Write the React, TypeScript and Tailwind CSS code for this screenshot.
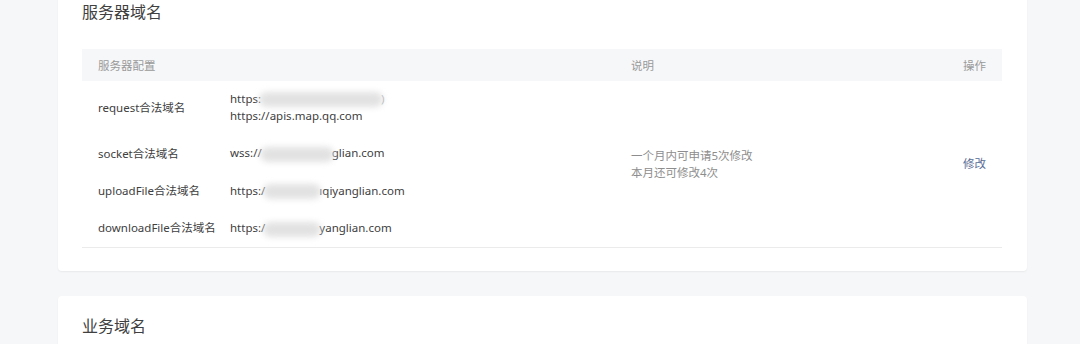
import { FC } from "react";

const font = "font-['Noto_Sans','Noto_Sans_CJK_SC',sans-serif]";

const Blur: FC<{ w: number }> = ({ w }) => (
  <span
    className="inline-block align-middle h-[15px] bg-[#e2e2e2] blur-[3px] rounded-full -mx-[2px]"
    style={{ width: w }}
  />
);

const rows = [
  {
    label: "request合法域名",
    urls: [
      <span key="a">https:<Blur w={124} /><span className="text-[#b0b0b0]">)</span></span>,
      <span key="b">https://apis.map.qq.com</span>,
    ],
  },
  { label: "socket合法域名", urls: [<span key="a">wss://<Blur w={74} />glian.com</span>] },
  { label: "uploadFile合法域名", urls: [<span key="a">https:/<Blur w={58} />ıqiyanglian.com</span>] },
  { label: "downloadFile合法域名", urls: [<span key="a">https:/<Blur w={58} />yanglian.com</span>] },
];

export default function App() {
  return (
    <div className={`min-h-[344px] bg-[#f6f7f9] pl-[58px] pb-6 overflow-hidden ${font}`}>
      <div className="-mt-[18px] w-[969px] bg-white rounded shadow-[0_1px_2px_rgba(0,0,0,0.06)] px-6 pt-[18px] pb-[23px]">
        <h2 className="text-base leading-6 text-[#404040] mb-[25px]">服务器域名</h2>
        <table className="w-[920px] text-[11.5px] leading-[17px] border-collapse">
          <thead>
            <tr className="bg-[#f6f7f9] text-[#9a9a9a]">
              <th className="w-[148px] pl-4 h-8 text-left font-normal">服务器配置</th>
              <th className="w-[401px] text-left font-normal"></th>
              <th className="text-left font-normal">说明</th>
              <th className="w-[80px] pr-4 text-right font-normal">操作</th>
            </tr>
          </thead>
          <tbody className="text-[#404040] border-b border-[#ebebeb]">
            {rows.map((row, i) => (
              <tr key={row.label}>
                <td className={`pl-4 align-middle whitespace-nowrap ${i === 0 ? "pt-[9px] pb-[10px]" : "py-[10px]"}`}>
                  {row.label}
                </td>
                <td className={`align-middle ${i === 0 ? "pt-[9px] pb-[10px]" : "py-[10px]"}`}>
                  <div className="flex flex-col whitespace-nowrap">{row.urls}</div>
                </td>
                {i === 0 && (
                  <>
                    <td rowSpan={4} className="align-middle text-[#8d8d8d]">
                      <div>一个月内可申请5次修改</div>
                      <div>本月还可修改4次</div>
                    </td>
                    <td rowSpan={4} className="align-middle text-right pr-4 text-[#576b95]">
                      修改
                    </td>
                  </>
                )}
              </tr>
            ))}
          </tbody>
        </table>
      </div>

      <div className="mt-[25px] w-[969px] bg-white rounded shadow-[0_1px_2px_rgba(0,0,0,0.06)] px-6 pt-[18px] h-[120px]">
        <h2 className="text-base leading-6 text-[#404040]">业务域名</h2>
      </div>
    </div>
  );
}
